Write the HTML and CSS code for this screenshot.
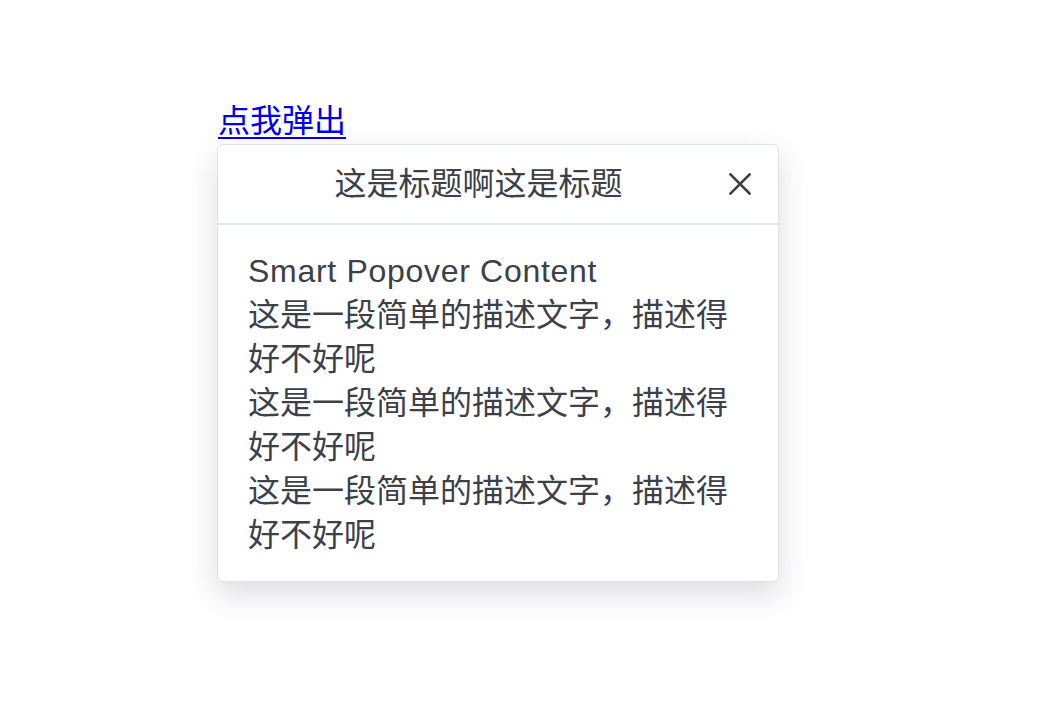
FILE: index.html
```html
<!DOCTYPE html>
<html lang="zh-CN">
<head>
<meta charset="utf-8">
<title>Smart Popover</title>
<link rel="stylesheet" href="styles.css">
</head>
<body>
<div class="stage">
  <a class="trigger" href="#">点我弹出</a>
  <div class="popover">
    <div class="popover-header">
      <div class="popover-title">这是标题啊这是标题</div>
      <button class="popover-close" type="button" aria-label="关闭">
        <svg width="22" height="22" viewBox="0 0 22 22"><path d="M1.5 1.5 L20.5 20.5 M20.5 1.5 L1.5 20.5" stroke="#3b4049" stroke-width="2.6" stroke-linecap="square" fill="none"/></svg>
      </button>
    </div>
    <div class="popover-body">
      <span class="latin">Smart Popover Content</span><br>
      这是一段简单的描述文字，描述得好不好呢<br>
      这是一段简单的描述文字，描述得好不好呢<br>
      这是一段简单的描述文字，描述得好不好呢
    </div>
  </div>
</div>
</body>
</html>
```
FILE: styles.css
```css
html, body {
  margin: 0;
  padding: 0;
  background: #ffffff;
  min-height: 100%;
}
html {
  height: 100%;
}
body {
  font-family: "Liberation Sans", "Noto Sans CJK SC", sans-serif;
}
.stage {
  padding: 99px 0 0 217px;
}
.trigger {
  display: inline-block;
  font-size: 32px;
  line-height: 44px;
  color: #0000ee;
  text-decoration: underline;
  text-underline-offset: 5px;
  text-decoration-thickness: 2px;
  padding-left: 1px;
}
.popover {
  margin-top: 1px;
  width: 560px;
  background: #ffffff;
  border: 1px solid #dfe2e6;
  border-radius: 6px;
  box-shadow: 0 12px 30px rgba(40, 50, 70, 0.17);
  color: #3b4049;
}
.popover-header {
  display: flex;
  align-items: center;
  gap: 15px;
  padding: 17px 22px 17px 30px;
  border-bottom: 2px solid #e2e5e9;
}
.popover-title {
  flex: 1;
  text-align: center;
  font-size: 32px;
  line-height: 44px;
}
.popover-close {
  width: 32px;
  height: 32px;
  padding: 0;
  border: 0;
  background: transparent;
  display: flex;
  align-items: center;
  justify-content: center;
}
.popover-body {
  padding: 24px 30px 24px 30px;
  font-size: 32px;
  line-height: 44px;
}
.latin {
  letter-spacing: 0.7px;
}
```
